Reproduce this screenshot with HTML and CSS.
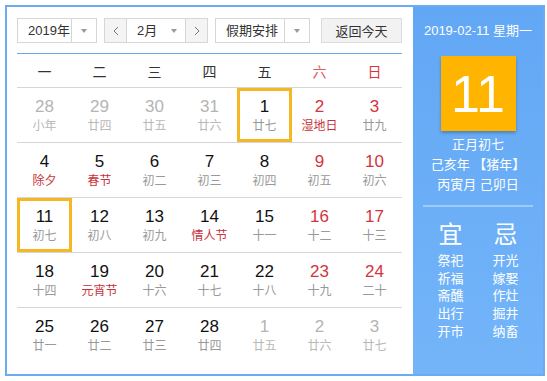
FILE: index.html
```html
<!DOCTYPE html>
<html lang="zh-CN">
<head>
<meta charset="UTF-8">
<title>万年历</title>
<link rel="stylesheet" href="styles.css">
</head>
<body>

<!-- ░░ calendar box ░░ -->
<div class="cal">

  <!-- ---------- left: month grid ---------- -->
  <div class="main">
    <div class="bar">
      <div class="sel sel-year"><span class="val">2019年</span><span class="drop"><i class="tri"></i></span></div>
      <div class="month">
        <span class="step"><svg width="6" height="10" viewBox="0 0 6 10"><polyline points="5,1 1,5 5,9" fill="none" stroke="#777" stroke-width="1"/></svg></span>
        <div class="sel sel-month"><span class="val">2月</span><span class="drop"><i class="tri"></i></span></div>
        <span class="step"><svg width="6" height="10" viewBox="0 0 6 10"><polyline points="1,1 5,5 1,9" fill="none" stroke="#777" stroke-width="1"/></svg></span>
      </div>
      <div class="sel sel-holiday"><span class="val">假期安排</span><span class="drop"><i class="tri"></i></span></div>
      <button class="today">返回今天</button>
    </div>

    <div class="week">
      <span>一</span><span>二</span><span>三</span><span>四</span><span>五</span>
      <span class="sat">六</span><span class="sun">日</span>
    </div>

    <div class="grid">
      <div class="row">
        <div class="day other"><b>28</b><em>小年</em></div>
        <div class="day other"><b>29</b><em>廿四</em></div>
        <div class="day other"><b>30</b><em>廿五</em></div>
        <div class="day other"><b>31</b><em>廿六</em></div>
        <div class="day hover"><b>1</b><em>廿七</em></div>
        <div class="day wk"><b>2</b><em class="fest">湿地日</em></div>
        <div class="day wk"><b>3</b><em>廿九</em></div>
      </div>
      <div class="row">
        <div class="day"><b>4</b><em class="fest">除夕</em></div>
        <div class="day"><b>5</b><em class="fest">春节</em></div>
        <div class="day"><b>6</b><em>初二</em></div>
        <div class="day"><b>7</b><em>初三</em></div>
        <div class="day"><b>8</b><em>初四</em></div>
        <div class="day wk"><b>9</b><em>初五</em></div>
        <div class="day wk"><b>10</b><em>初六</em></div>
      </div>
      <div class="row">
        <div class="day picked"><b>11</b><em>初七</em></div>
        <div class="day"><b>12</b><em>初八</em></div>
        <div class="day"><b>13</b><em>初九</em></div>
        <div class="day"><b>14</b><em class="fest">情人节</em></div>
        <div class="day"><b>15</b><em>十一</em></div>
        <div class="day wk"><b>16</b><em>十二</em></div>
        <div class="day wk"><b>17</b><em>十三</em></div>
      </div>
      <div class="row">
        <div class="day"><b>18</b><em>十四</em></div>
        <div class="day"><b>19</b><em class="fest">元宵节</em></div>
        <div class="day"><b>20</b><em>十六</em></div>
        <div class="day"><b>21</b><em>十七</em></div>
        <div class="day"><b>22</b><em>十八</em></div>
        <div class="day wk"><b>23</b><em>十九</em></div>
        <div class="day wk"><b>24</b><em>二十</em></div>
      </div>
      <div class="row">
        <div class="day"><b>25</b><em>廿一</em></div>
        <div class="day"><b>26</b><em>廿二</em></div>
        <div class="day"><b>27</b><em>廿三</em></div>
        <div class="day"><b>28</b><em>廿四</em></div>
        <div class="day other"><b>1</b><em>廿五</em></div>
        <div class="day other"><b>2</b><em>廿六</em></div>
        <div class="day other"><b>3</b><em>廿七</em></div>
      </div>
    </div>
  </div>

  <!-- ---------- right: today panel ---------- -->
  <aside class="side">
    <div class="date">2019-02-11 星期一</div>
    <div class="big">11</div>
    <div class="lunar">
      <p>正月初七</p>
      <p>己亥年 【猪年】</p>
      <p>丙寅月 己卯日</p>
    </div>
    <hr>
    <div class="yiji">
      <div class="col">
        <h2>宜</h2>
        <p>祭祀</p><p>祈福</p><p>斋醮</p><p>出行</p><p>开市</p>
      </div>
      <div class="col">
        <h2>忌</h2>
        <p>开光</p><p>嫁娶</p><p>作灶</p><p>掘井</p><p>纳畜</p>
      </div>
    </div>
  </aside>

</div>

</body>
</html>
```

FILE: styles.css
```css
/* ===== global ===== */
:root{ --blue:#6aabf3; --line:#d6d6d6; --red:#d3343c; --fest:#c8323a; --grey:#999 }
html,body{margin:0;background:#fff}
body{font-family:"Liberation Sans","Noto Sans CJK SC",sans-serif;color:#222}

/* ===== outer box ===== */
.cal{
  display:flex;margin:5px 0 0 5px;width:540px;height:371px;box-sizing:border-box;
  border:2px solid var(--blue)
}
.main{width:385px;padding:11px 0 0 10px}

/* ---------- header controls ---------- */
.bar{display:flex;gap:7px;height:25px;padding-bottom:10px;border-bottom:1px solid #69a6ea}
.sel{display:flex;height:25px;box-sizing:border-box;border:1px solid var(--line);background:#fff;font-size:13px;color:#333}
.sel .val{flex:1;display:flex;align-items:center;padding-left:10px;line-height:23px}
.sel .drop{width:24px;display:flex;align-items:center;justify-content:center;border-left:1px solid var(--line)}
.sel-year{width:80px}
.sel-holiday{width:95px}
.tri{width:0;height:0;border-left:3.5px solid transparent;border-right:3.5px solid transparent;border-top:4px solid #9a9a9a}

.month{display:flex;height:25px;box-sizing:border-box;border:1px solid var(--line)}
.month .step{width:21px;display:flex;align-items:center;justify-content:center;background:#f4f4f4}
.sel-month{width:60px;border:none;border-left:1px solid var(--line);border-right:1px solid var(--line);height:23px}
.sel-month .drop{border-left:none;width:22px}

.today{
  margin-left:auto;width:81px;height:25px;padding:0;border:1px solid #dcdcdc;background:#f2f2f2;
  font:13px "Liberation Sans","Noto Sans CJK SC",sans-serif;color:#333
}

/* ---------- weekday header ---------- */
.week{display:grid;grid-template-columns:repeat(7,55px);height:33px;align-items:center;border-bottom:1px solid var(--line);font-size:14px;color:#333;text-align:center}
.week .sat{color:#e05a5a}
.week .sun{color:#e0323c}

/* ---------- days ---------- */
.row{display:grid;grid-template-columns:repeat(7,55px);height:54px;border-bottom:1px solid var(--line)}
.row:last-child{border-bottom:none}
.day{display:flex;flex-direction:column;align-items:center;padding-top:9px;box-sizing:border-box;height:54px}
.day b{font-weight:normal;font-size:17px;line-height:20px;color:#111}
.day em{font-style:normal;font-size:12px;line-height:18px;color:var(--grey)}
.day em.fest{color:var(--fest)}
.day.wk b{color:var(--red)}
.day.other b{color:#b4b4b4}
.day.other em{color:#b8b8b8}
.day.hover,.day.picked{box-shadow:inset 0 0 0 3px #f5b824}

/* ---------- today panel ---------- */
.side{
  margin-left:11px;width:130px;display:flex;flex-direction:column;align-items:center;padding-top:16px;box-sizing:border-box;
  background:linear-gradient(#62a7f5,#74b5f9);color:#fff
}
.date{font-size:13px;line-height:16px}
.big{
  margin-top:17px;width:75px;height:75px;display:flex;align-items:center;justify-content:center;
  background:#ffb500;font-size:52px;line-height:1;box-shadow:0 2px 3px rgba(0,0,0,.25)
}
.lunar{margin-top:4px;text-align:center}
.lunar p{margin:0;font-size:13px;line-height:20px}
.side hr{width:110px;margin:10px 0 0;border:none;border-top:2px solid rgba(255,255,255,.35)}
.yiji{display:grid;grid-template-columns:55px 55px;margin-top:13px;text-align:center}
.yiji h2{margin:0 0 2px;font-weight:normal;font-size:24px;line-height:30px}
.yiji p{margin:0;font-size:13px;line-height:17.7px}
```
